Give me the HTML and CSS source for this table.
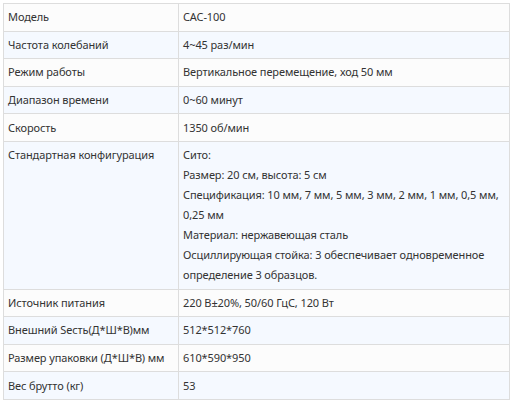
FILE: index.html
```html
<!DOCTYPE html>
<html lang="ru">
<head>
<meta charset="utf-8">
<link rel="stylesheet" href="styles.css">
</head>
<body>
<table class="spec">
  <colgroup><col class="c1"><col class="c2"></colgroup>
  <tbody>
    <tr><td>Модель</td><td>CAC-100</td></tr>
    <tr><td>Частота колебаний</td><td>4~45 раз/мин</td></tr>
    <tr><td>Режим работы</td><td>Вертикальное перемещение, ход 50 мм</td></tr>
    <tr><td>Диапазон времени</td><td>0~60 минут</td></tr>
    <tr><td>Скорость</td><td>1350 об/мин</td></tr>
    <tr><td>Стандартная конфигурация</td><td>Сито:<br>Размер: 20 см, высота: 5 см<br>Спецификация: 10 мм, 7 мм, 5 мм, 3 мм, 2 мм, 1 мм, 0,5 мм, 0,25 мм<br>Материал: нержавеющая сталь<br>Осциллирующая стойка: 3 обеспечивает одновременное определение 3 образцов.</td></tr>
    <tr><td>Источник питания</td><td>220 В±20%, 50/60 ГцС, 120 Вт</td></tr>
    <tr><td>Внешний Sесть(Д*Ш*В)мм</td><td>512*512*760</td></tr>
    <tr><td>Размер упаковки (Д*Ш*В) мм</td><td>610*590*950</td></tr>
    <tr><td>Вес брутто (кг)</td><td>53</td></tr>
  </tbody>
</table>
</body>
</html>
```
FILE: styles.css
```css
html, body {
  margin: 0;
  background: #ffffff;
}
body {
  padding: 3px;
  font-family: "Noto Sans", "Open Sans", sans-serif;
  font-size: 11px;
  letter-spacing: -0.1px;
  color: #333333;
}
.spec {
  border-collapse: collapse;
  width: 507px;
  table-layout: fixed;
}
.spec .c1 { width: 175px; }
.spec td {
  border: 1px solid #dddddd;
  padding: 3.3px 4px;
  line-height: 20px;
  vertical-align: top;
  background: #fcfcfc;
}
.spec tr:nth-child(even) td {
  background: #f5f9ff;
}
```
